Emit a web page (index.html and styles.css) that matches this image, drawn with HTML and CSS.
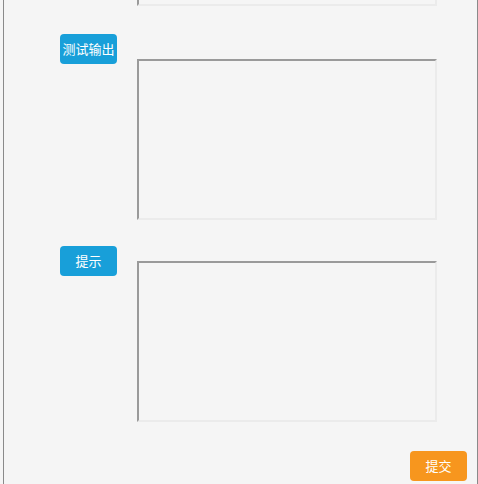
FILE: index.html
```html
<!DOCTYPE html>
<html lang="zh-CN">
<head>
<meta charset="utf-8">
<title>测试</title>
<link rel="stylesheet" href="styles.css">
</head>
<body>
<div class="wrap">
  <div class="row row-first">
    <textarea class="box"></textarea>
  </div>
  <div class="row row-output">
    <button class="btn btn-blue">测试输出</button>
    <textarea class="box box-output"></textarea>
  </div>
  <div class="row row-hint">
    <button class="btn btn-blue">提示</button>
    <textarea class="box box-hint"></textarea>
  </div>
  <div class="actions">
    <button class="btn btn-orange">提交</button>
  </div>
</div>
</body>
</html>
```
FILE: styles.css
```css
html, body {
  margin: 0;
  padding: 0;
  background: #f5f5f5;
  overflow: hidden;
}
body {
  height: 484px;
}
.wrap {
  margin: -155px 0 0 3px;
  width: 473px;
  padding-bottom: 3px;
  border-left: 1px solid #8a8a8a;
  border-right: 1px solid #8a8a8a;
  font-family: "Noto Sans CJK SC", "Microsoft YaHei", sans-serif;
}
.row {
  display: flex;
  align-items: flex-start;
  padding-left: 56px;
  gap: 20px;
}
.row-first {
  padding-left: 133px;
}
.row-output {
  margin-top: 28px;
}
.row-hint {
  margin-top: 26px;
}
.box {
  display: block;
  box-sizing: border-box;
  width: 300px;
  height: 161px;
  margin: 0;
  padding: 2px;
  resize: none;
  background: #f5f5f5;
  border-style: solid;
  border-width: 2px;
  border-color: #9a9a9a #ebebeb #ebebeb #9a9a9a;
  outline: none;
}
.box-output {
  margin-top: 25px;
}
.box-hint {
  margin-top: 15px;
}
.btn {
  box-sizing: border-box;
  width: 57px;
  height: 30px;
  padding: 0;
  border: none;
  border-radius: 4px;
  color: #fff;
  font-family: "Noto Sans CJK SC", "Microsoft YaHei", sans-serif;
  font-size: 13px;
  line-height: 30px;
  flex: none;
  cursor: pointer;
}
.btn-blue {
  background: #189fd9;
}
.btn-orange {
  background: #f7961e;
}
.actions {
  display: flex;
  justify-content: flex-end;
  padding-right: 10px;
  margin-top: 29px;
}
```
